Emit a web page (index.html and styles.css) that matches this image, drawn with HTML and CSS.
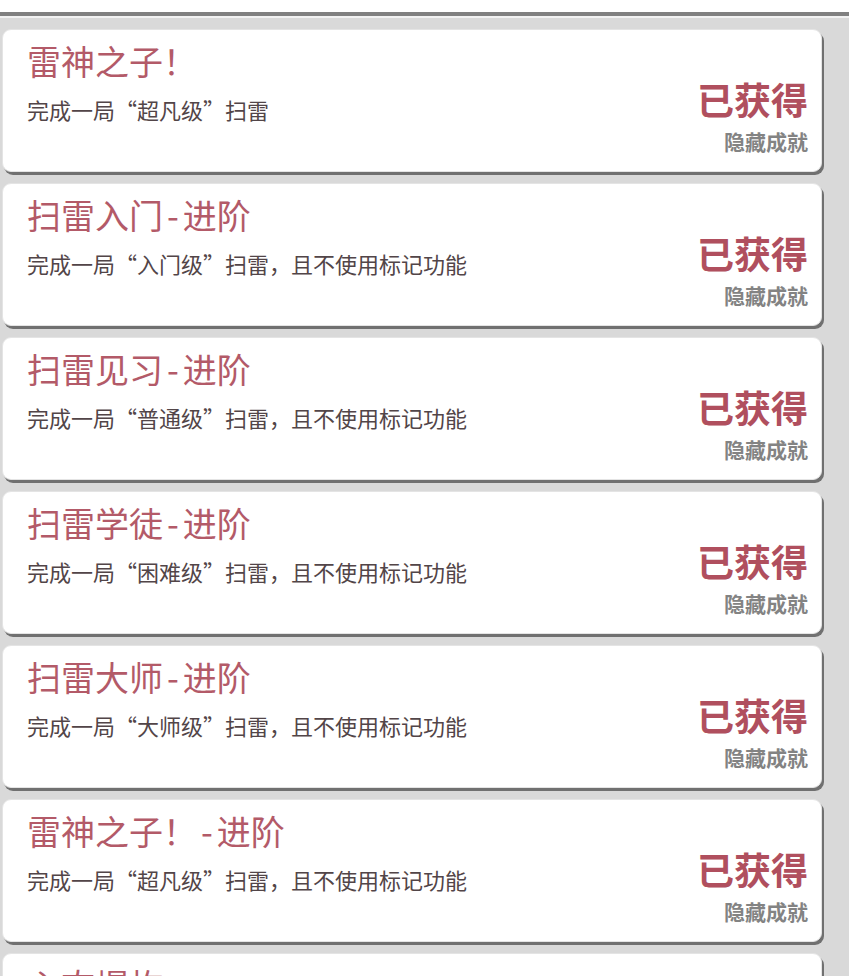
FILE: index.html
```html
<!DOCTYPE html>
<html lang="zh-CN">
<head>
<meta charset="utf-8">
<title>成就</title>
<link rel="stylesheet" href="styles.css">
</head>
<body>
<header class="topbar"></header>
<main class="list">
  <section class="card">
    <div class="info">
      <h2 class="title">雷神之子！</h2>
      <p class="desc">完成一局“超凡级”扫雷</p>
    </div>
    <div class="status">
      <span class="got">已获得</span>
      <span class="tag">隐藏成就</span>
    </div>
  </section>
  <section class="card">
    <div class="info">
      <h2 class="title">扫雷入门<span class="dash">-</span>进阶</h2>
      <p class="desc">完成一局“入门级”扫雷，且不使用标记功能</p>
    </div>
    <div class="status">
      <span class="got">已获得</span>
      <span class="tag">隐藏成就</span>
    </div>
  </section>
  <section class="card">
    <div class="info">
      <h2 class="title">扫雷见习<span class="dash">-</span>进阶</h2>
      <p class="desc">完成一局“普通级”扫雷，且不使用标记功能</p>
    </div>
    <div class="status">
      <span class="got">已获得</span>
      <span class="tag">隐藏成就</span>
    </div>
  </section>
  <section class="card">
    <div class="info">
      <h2 class="title">扫雷学徒<span class="dash">-</span>进阶</h2>
      <p class="desc">完成一局“困难级”扫雷，且不使用标记功能</p>
    </div>
    <div class="status">
      <span class="got">已获得</span>
      <span class="tag">隐藏成就</span>
    </div>
  </section>
  <section class="card">
    <div class="info">
      <h2 class="title">扫雷大师<span class="dash">-</span>进阶</h2>
      <p class="desc">完成一局“大师级”扫雷，且不使用标记功能</p>
    </div>
    <div class="status">
      <span class="got">已获得</span>
      <span class="tag">隐藏成就</span>
    </div>
  </section>
  <section class="card">
    <div class="info">
      <h2 class="title">雷神之子！<span class="dash">-</span>进阶</h2>
      <p class="desc">完成一局“超凡级”扫雷，且不使用标记功能</p>
    </div>
    <div class="status">
      <span class="got">已获得</span>
      <span class="tag">隐藏成就</span>
    </div>
  </section>
  <section class="card">
    <div class="info">
      <h2 class="title">心态爆炸</h2>
      <p class="desc">连续失败十局</p>
    </div>
    <div class="status">
      <span class="got">已获得</span>
      <span class="tag">隐藏成就</span>
    </div>
  </section>
</main>
</body>
</html>
```

FILE: styles.css
```css
html, body {
  margin: 0;
  padding: 0;
  overflow: hidden;
}

body {
  background: #d9d9d9;
  font-family: "Noto Sans CJK SC", "Noto Sans", sans-serif;
}

/* white strip with a grey rule under it */
.topbar {
  height: 12px;
  background: #ffffff;
  border-bottom: 4px solid #808080;
  box-shadow: 0 2px 0 #f2f2f2;
}

.list {
  display: flex;
  flex-direction: column;
  gap: 11px;
  padding: 13px 27px 0 2px;
}

.card {
  box-sizing: border-box;
  height: 143px;
  display: flex;
  justify-content: space-between;
  background: #ffffff;
  border: 1px solid #e4e4e4;
  border-radius: 9px;
  box-shadow: 2px 3px 0 #707070;
  padding: 9px 13px 16px 24px;
}

.info {
  display: flex;
  flex-direction: column;
}

.title {
  margin: 0;
  font-size: 34px;
  line-height: 44px;
  font-weight: 400;
  color: #b35a68;
}

.dash {
  margin: 0 4px;
}

.desc {
  margin: 12px 0 0;
  font-size: 22px;
  line-height: 28px;
  color: #524548;
}

.status {
  display: flex;
  flex-direction: column;
  align-items: flex-end;
  justify-content: flex-end;
}

.got {
  margin-bottom: 5px;
  font-size: 37px;
  line-height: 46px;
  font-weight: 700;
  color: #b04f5e;
}

.tag {
  font-size: 21px;
  line-height: 28px;
  font-weight: 700;
  color: #838383;
}
```
